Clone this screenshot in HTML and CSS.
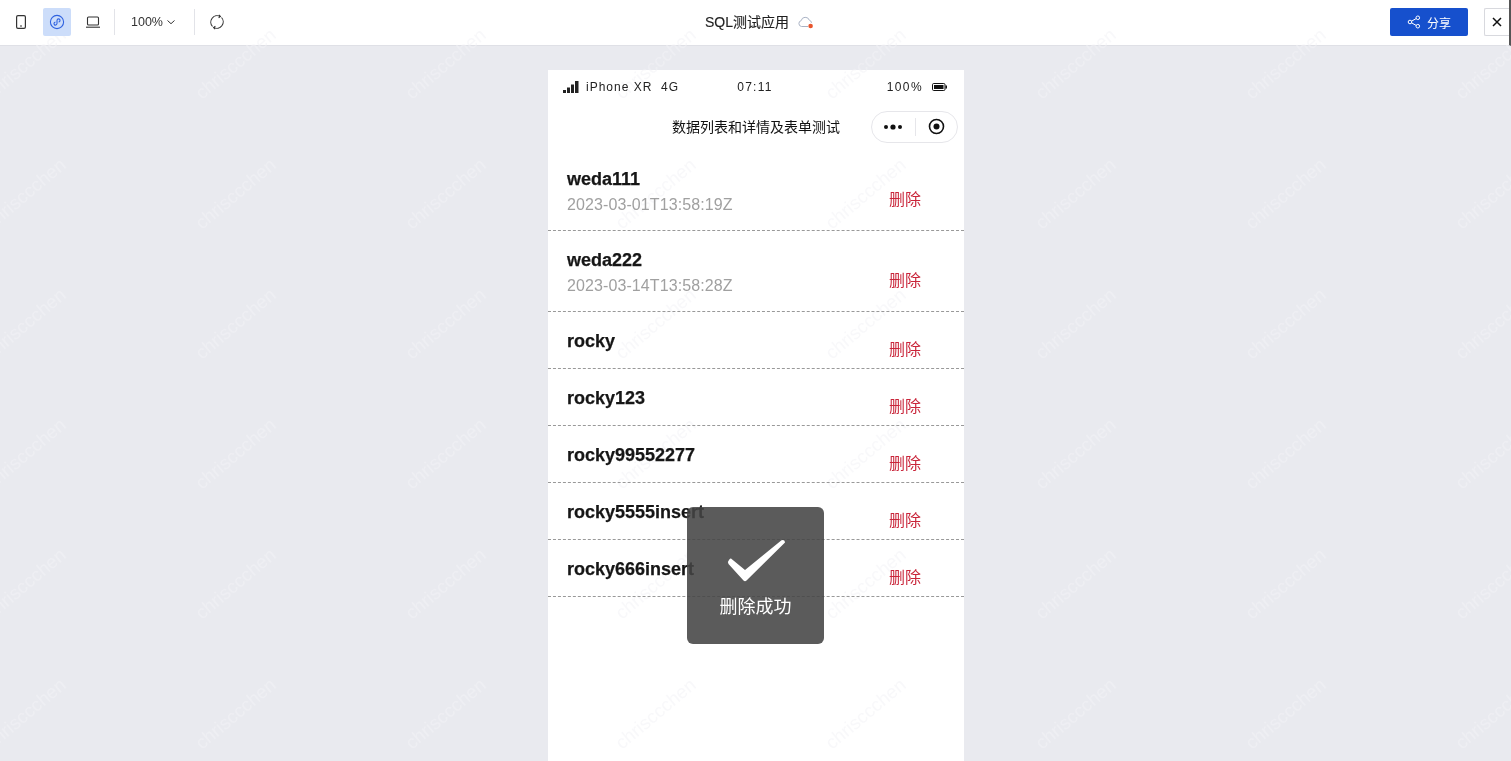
FILE: index.html
```html
<!DOCTYPE html>
<html lang="en">

<head>
    <meta charset="UTF-8">
    <title>SQL测试应用</title>
    <link rel="stylesheet" href="styles.css">
</head>

<body>
    <header class="toolbar">
        <div class="tools layer">
            <button class="tool">
                <svg width="16" height="16" viewBox="0 0 16 16" fill="none" stroke="#333" stroke-width="1.2"><rect x="3.6" y="1.6" width="8.8" height="12.8" rx="1.4"/><path d="M7 12h2"/></svg>
            </button>
            <button class="tool active">
                <svg width="16" height="16" viewBox="0 0 16 16" fill="none" stroke="#2f62e0" stroke-width="1.1"><circle cx="8" cy="8" r="6.6"/><path d="M5 9.6c0 2 2.8 2 3-.1V6.5c.2-2.100 3-2.100 3-.1 0 1-.7 1.500-1.400 1.600M6.400 8.100C5.600 8.200 5 8.800 5 9.600"/></svg>
            </button>
            <button class="tool">
                <svg width="16" height="16" viewBox="0 0 16 16" fill="none" stroke="#333" stroke-width="1.1"><rect x="2.500" y="3" width="11" height="8" rx="1"/><path d="M1 13.200h14"/></svg>
            </button>
            <span class="divider"></span>
            <span class="zoom-select">100%
                <svg width="10" height="10" viewBox="0 0 10 10" fill="none" stroke="#333" stroke-width="1"><path d="M1.500 3.500 5 6.700l3.500-3.200"/></svg>
            </span>
            <span class="divider"></span>
            <button class="tool refresh">
                <svg width="16" height="16" viewBox="0 0 16 16" fill="none" stroke="#333" stroke-width="1.1"><path d="M3.500 12.500A6.400 6.400 0 0 1 11.200 2.500M12.500 3.500A6.400 6.400 0 0 1 4.800 13.500"/><path d="M9.800 .9l1.600 1.600-1.800 1.400M6.200 15.100l-1.600-1.600 1.800-1.400"/></svg>
            </button>
        </div>
        <div class="app-title layer">
            <span>SQL测试应用</span>
            <svg width="16" height="14" viewBox="0 0 16 14" fill="none"><path d="M4 11.500H3.600a3 3 0 0 1-.4-5.900 4.200 4.200 0 0 1 8.100-.4 3 3 0 0 1 2.200 2.600" stroke="#a9b2c4" stroke-width="1"/><path d="M4 11.500h6" stroke="#a9b2c4" stroke-width="1"/><circle cx="12.600" cy="11" r="2.300" fill="#e8552d"/></svg>
        </div>
        <div class="actions layer">
            <button class="share">
                <svg width="14" height="14" viewBox="0 0 14 14" fill="none" stroke="#fff" stroke-width="1"><circle cx="3" cy="7" r="1.800"/><circle cx="10.800" cy="2.800" r="1.800"/><circle cx="10.800" cy="11.200" r="1.800"/><path d="M4.600 6.100l4.600-2.500M4.600 7.900l4.600 2.500"/></svg>
                分享
            </button>
            <button class="close">
                <svg width="10" height="10" viewBox="0 0 10 10" stroke="#111" stroke-width="1.500"><path d="M1 1l8 8M9 1 1 9"/></svg>
            </button>
        </div>
    </header>

    <main class="canvas">
        <section class="phone">
            <div class="status-bar layer">
                <span class="status-left">
                    <svg width="16" height="12" viewBox="0 0 16 12" fill="#222"><rect x="0" y="9" width="3" height="3"/><rect x="4" y="6.500" width="3" height="5.500"/><rect x="8" y="3.500" width="3" height="8.500"/><rect x="12" y="0" width="3.500" height="12"/></svg>
                    iPhone XR&nbsp; 4G
                </span>
                <span class="status-time">07:11</span>
                <span class="status-right">100%
                    <svg width="15" height="8" viewBox="0 0 15 8"><rect x=".5" y=".5" width="12.500" height="7" rx="1.200" fill="none" stroke="#111"/><rect x="2" y="2" width="9.500" height="4" fill="#111"/><rect x="13.500" y="2.500" width="1.500" height="3" fill="#111"/></svg>
                </span>
            </div>
            <div class="nav-bar layer">
                <span class="nav-title">数据列表和详情及表单测试</span>
                <div class="capsule">
                    <svg width="20" height="6" viewBox="0 0 20 6" fill="#111"><circle cx="3" cy="3" r="2"/><circle cx="10" cy="3" r="2.600"/><circle cx="17" cy="3" r="2"/></svg>
                    <span class="capsule-line"></span>
                    <svg width="17" height="17" viewBox="0 0 17 17"><circle cx="8.500" cy="8.500" r="7" fill="none" stroke="#111" stroke-width="1.600"/><circle cx="8.500" cy="8.500" r="3" fill="#111"/></svg>
                </div>
            </div>

            <ul class="list layer">
                <li class="row tall">
                    <div class="row-text">
                        <div class="name">weda111</div>
                        <div class="date">2023-03-01T13:58:19Z</div>
                    </div>
                    <span class="delete">删除</span>
                </li>
                <li class="row tall">
                    <div class="row-text">
                        <div class="name">weda222</div>
                        <div class="date">2023-03-14T13:58:28Z</div>
                    </div>
                    <span class="delete">删除</span>
                </li>
                <li class="row">
                    <div class="row-text"><div class="name">rocky</div></div>
                    <span class="delete">删除</span>
                </li>
                <li class="row">
                    <div class="row-text"><div class="name">rocky123</div></div>
                    <span class="delete">删除</span>
                </li>
                <li class="row">
                    <div class="row-text"><div class="name">rocky99552277</div></div>
                    <span class="delete">删除</span>
                </li>
                <li class="row">
                    <div class="row-text"><div class="name">rocky5555insert</div></div>
                    <span class="delete">删除</span>
                </li>
                <li class="row">
                    <div class="row-text"><div class="name">rocky666insert</div></div>
                    <span class="delete">删除</span>
                </li>
            </ul>

            <div class="toast">
                <svg width="60" height="44" viewBox="0 0 60 44"><path d="M5 19.500 19 31 55.500 1.200Q59 0 59 3.500L20.500 41.500Q19 43 17.500 41.500L2.500 25Q1 23 3 21Q4 19 5 19.500Z" fill="#fff"/></svg>
                <span>删除成功</span>
            </div>
        </section>
    </main>

    <!-- Watermark sits above the backgrounds, below the .layer content -->
    <svg class="watermark" width="1511" height="761">
        <defs>
            <pattern id="wm" width="210" height="130" patternUnits="userSpaceOnUse" x="-13" y="10">
                <text transform="translate(5 90) rotate(-40)" class="wm-text">chrisccchen</text>
            </pattern>
        </defs>
        <rect width="1511" height="761" fill="url(#wm)"/>
    </svg>
</body>

</html>
```

FILE: styles.css
```css
* {
    box-sizing: border-box;
}

html,
body {
    height: 100%;
}

body {
    margin: 0;
    overflow: hidden;
    position: relative;
    display: flex;
    flex-direction: column;
    background-color: #e9eaef;
    font-family: "Liberation Sans", "Noto Sans CJK SC", sans-serif;
    color: #222;
}

button {
    font-family: inherit;
    border: none;
    background: none;
    padding: 0;
    cursor: pointer;
}

.layer {
    position: relative;
    z-index: 2;
    will-change: transform;
}

/* Top toolbar */
.toolbar {
    flex: none;
    height: 46px;
    padding: 0 0 1px 7px;
    display: grid;
    grid-template-columns: 698px 1fr 119px;
    align-items: center;
    background: #fff;
    border-bottom: 1px solid #dfe0e6;
    border-right: 2px solid #555;
}

.tools {
    display: flex;
    align-items: center;
}

.tool {
    width: 28px;
    height: 28px;
    margin-right: 8px;
    display: flex;
    align-items: center;
    justify-content: center;
    border-radius: 2px;
}

.tool.active {
    background: #ccddfa;
}

.tool.refresh {
    margin: 0 0 0 8px;
}

.divider {
    width: 1px;
    height: 26px;
    margin-left: -1px;
    background: #e2e3e8;
}

.zoom-select {
    margin-left: 16px;
    margin-right: 19px;
    display: flex;
    align-items: center;
    gap: 3px;
    font-size: 12.500px;
    color: #333;
}

.app-title {
    display: flex;
    align-items: center;
    gap: 9px;
    margin-bottom: 1px;
    font-size: 14px;
    line-height: 18px;
    color: #1f1f1f;
    -webkit-text-stroke: 0.15px #1f1f1f;
}

.actions {
    display: flex;
    align-items: center;
    justify-content: flex-end;
}

.share {
    width: 78px;
    height: 28px;
    display: flex;
    align-items: center;
    justify-content: center;
    gap: 6px;
    background: #1650cd;
    color: #fff;
    font-size: 12px;
    border-radius: 2px;
}

.close {
    width: 25px;
    height: 28px;
    margin-left: 16px;
    background: #fff;
    border: 1px solid #d8d9de;
    border-right: none;
    border-radius: 2px 0 0 2px;
    display: flex;
    align-items: center;
    justify-content: center;
}

/* Phone preview */
.canvas {
    flex: 1;
    min-height: 0;
    padding: 24px 0 0 1px;
    display: flex;
    justify-content: center;
}

.phone {
    width: 416px;
    position: relative;
    background: #fff;
}

.status-bar {
    height: 34px;
    padding: 0 17px 0 15px;
    display: grid;
    grid-template-columns: 1fr auto 1fr;
    align-items: center;
    font-size: 12px;
    letter-spacing: 1px;
    color: #222;
}

.status-left {
    display: flex;
    align-items: center;
    gap: 7px;
}

.status-time {
    letter-spacing: 1.300px;
}

.status-right {
    display: flex;
    align-items: center;
    justify-content: flex-end;
    gap: 9px;
    letter-spacing: 1.400px;
}

.nav-bar {
    height: 46px;
    padding-right: 6px;
    padding-bottom: 1px;
    display: flex;
    align-items: center;
    justify-content: flex-end;
}

.nav-title {
    position: absolute;
    left: 0;
    right: 0;
    margin-top: -2px;
    text-align: center;
    font-size: 14px;
    color: #111;
}

.capsule {
    width: 87px;
    height: 32px;
    display: flex;
    align-items: center;
    justify-content: space-between;
    padding: 0 12px 0 11px;
    border: 1px solid #e6e6ea;
    border-radius: 16px;
    background: #fff;
    position: relative;
}

.capsule-line {
    width: 1px;
    height: 18px;
    background: #e6e6ea;
}

.list {
    list-style: none;
    margin: 0;
    padding: 0;
}

.row {
    height: 57px;
    padding: 18px 43px 0 19px;
    display: flex;
    justify-content: space-between;
    border-bottom: 1px dashed #999;
}

.row.tall {
    height: 81px;
    padding-top: 18px;
}

.name {
    font-size: 18px;
    font-weight: 700;
    line-height: 22px;
    color: #161616;
    -webkit-text-stroke: 0.25px #161616;
}

.date {
    margin-top: 2px;
    font-size: 16px;
    line-height: 26px;
    letter-spacing: 0.1px;
    color: #a0a0a0;
}

.delete {
    margin-top: 9px;
    font-size: 16px;
    line-height: 22px;
    color: #c9253a;
}

.row.tall .delete {
    margin-top: 21px;
}

/* Success toast */
.toast {
    position: absolute;
    z-index: 3;
    left: 139px;
    top: 437px;
    width: 137px;
    height: 137px;
    padding-top: 32px;
    display: flex;
    flex-direction: column;
    align-items: center;
    gap: 9px;
    background: rgba(68, 68, 68, 0.88);
    border-radius: 6px;
    color: #fff;
    font-size: 18px;
}

/* Watermark */
.watermark {
    position: absolute;
    z-index: 1;
    left: 0;
    top: 0;
    pointer-events: none;
}

.wm-text {
    font-family: "Liberation Sans", sans-serif;
    font-size: 18.600px;
    fill: #f2f2f5;
    fill-opacity: 0.55;
}
```
